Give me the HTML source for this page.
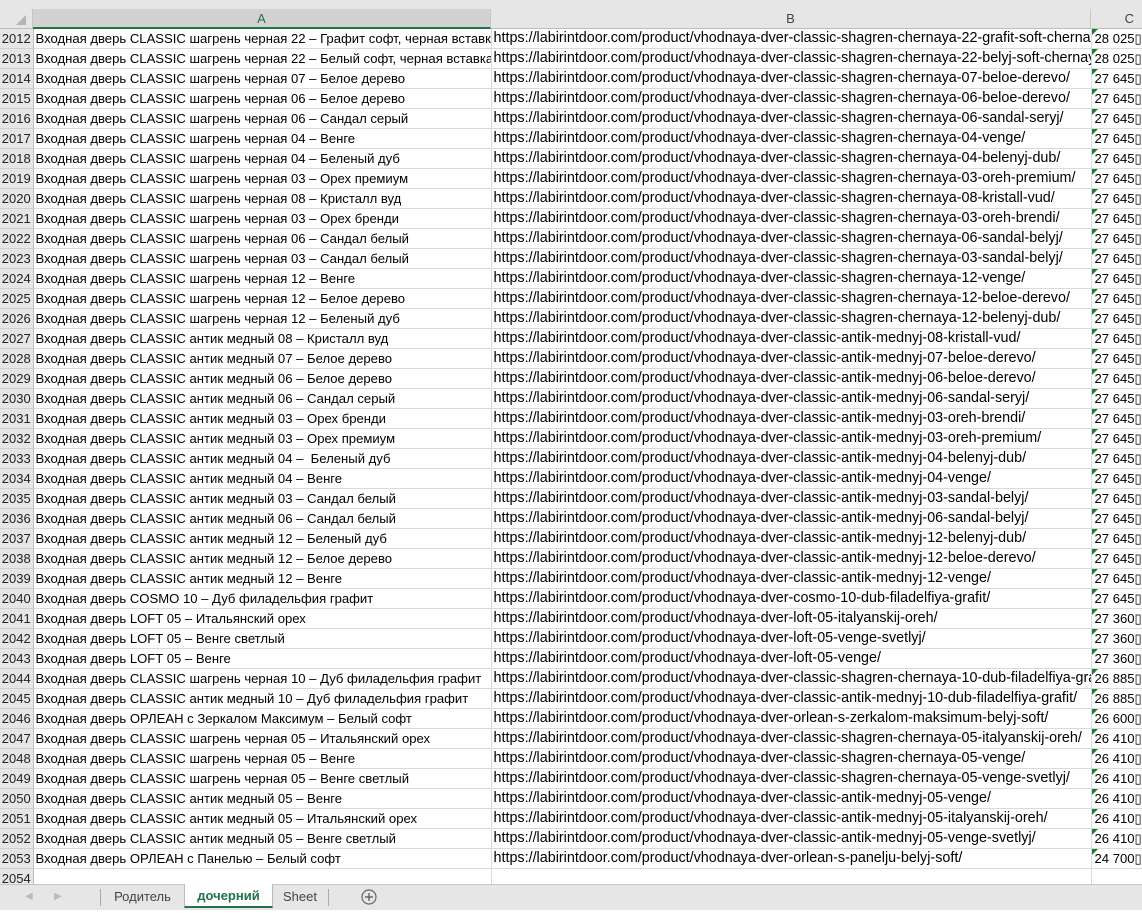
<!DOCTYPE html>
<html><head><meta charset="utf-8"><style>
body{margin:0;width:1142px;height:909px;overflow:hidden;background:#fff;font-family:"Liberation Sans",sans-serif;font-size:13.1px;color:#000;position:relative}
.top{position:absolute;left:0;top:0;width:1142px;height:9px;background:#e6e6e6}
.hdr{position:absolute;top:9px;left:0;height:19px;width:1142px;background:#e6e6e6;border-bottom:1px solid #bdbdbd}
.hdr div{position:absolute;top:0;height:19px;line-height:20px;text-align:center;color:#444;font-size:13px;border-right:1px solid #c6c6c6}
.hdr .a{background:#d2d2d2;border-bottom:2px solid #217346;height:18px;color:#217346}
table{position:absolute;top:29px;left:0;width:1142px;border-collapse:collapse;table-layout:fixed}
td{height:19px;border-right:1px solid #dadada;border-bottom:1px solid #dadada;padding:0 0 0 2px;white-space:nowrap;overflow:hidden;line-height:19px}
td.u{font-size:14.35px;padding-left:2px}
td.n{background:#e6e6e6;color:#222;padding:0;text-align:center;border-right:1px solid #bdbdbd;border-bottom:1px solid #d0d0d0;font-size:13px}
td.c{position:relative;padding-left:3px}
td.c:before{content:"";position:absolute;left:0;top:0;border-top:6px solid #1e7a32;border-right:6px solid transparent}
.tabs{position:absolute;left:0;top:884px;width:1142px;height:25px;background:#e6e6e6;border-top:1px solid #c6c6c6;font-size:13px;color:#444}
.tabs span{position:absolute;top:0;height:24px;line-height:24px}
</style></head><body>
<div class="top"></div>
<div class="hdr">
<div style="left:0;width:32px;background:#e6e6e6"><svg width="32" height="19"><polygon points="26,6 26,16 16,16" fill="#b4b4b4"/></svg></div>
<div class="a" style="left:33px;width:457px">A</div>
<div style="left:491px;width:599px">B</div>
<div style="left:1091px;width:51px;border-right:none;text-align:right;padding-right:8px;box-sizing:border-box">C</div>
</div>
<table>
<colgroup><col style="width:33px"><col style="width:458px"><col style="width:600px"><col style="width:51px"></colgroup>
<tbody>
<tr><td class="n">2012</td><td>Входная дверь CLASSIC шагрень черная 22 – Графит софт, черная вставка</td><td class="u">https://labirintdoor.com/product/vhodnaya-dver-classic-shagren-chernaya-22-grafit-soft-chernaya/</td><td class="c">28 025▯</td></tr>
<tr><td class="n">2013</td><td>Входная дверь CLASSIC шагрень черная 22 – Белый софт, черная вставка</td><td class="u">https://labirintdoor.com/product/vhodnaya-dver-classic-shagren-chernaya-22-belyj-soft-chernaya/</td><td class="c">28 025▯</td></tr>
<tr><td class="n">2014</td><td>Входная дверь CLASSIC шагрень черная 07 – Белое дерево</td><td class="u">https://labirintdoor.com/product/vhodnaya-dver-classic-shagren-chernaya-07-beloe-derevo/</td><td class="c">27 645▯</td></tr>
<tr><td class="n">2015</td><td>Входная дверь CLASSIC шагрень черная 06 – Белое дерево</td><td class="u">https://labirintdoor.com/product/vhodnaya-dver-classic-shagren-chernaya-06-beloe-derevo/</td><td class="c">27 645▯</td></tr>
<tr><td class="n">2016</td><td>Входная дверь CLASSIC шагрень черная 06 – Сандал серый</td><td class="u">https://labirintdoor.com/product/vhodnaya-dver-classic-shagren-chernaya-06-sandal-seryj/</td><td class="c">27 645▯</td></tr>
<tr><td class="n">2017</td><td>Входная дверь CLASSIC шагрень черная 04 – Венге</td><td class="u">https://labirintdoor.com/product/vhodnaya-dver-classic-shagren-chernaya-04-venge/</td><td class="c">27 645▯</td></tr>
<tr><td class="n">2018</td><td>Входная дверь CLASSIC шагрень черная 04 – Беленый дуб</td><td class="u">https://labirintdoor.com/product/vhodnaya-dver-classic-shagren-chernaya-04-belenyj-dub/</td><td class="c">27 645▯</td></tr>
<tr><td class="n">2019</td><td>Входная дверь CLASSIC шагрень черная 03 – Орех премиум</td><td class="u">https://labirintdoor.com/product/vhodnaya-dver-classic-shagren-chernaya-03-oreh-premium/</td><td class="c">27 645▯</td></tr>
<tr><td class="n">2020</td><td>Входная дверь CLASSIC шагрень черная 08 – Кристалл вуд</td><td class="u">https://labirintdoor.com/product/vhodnaya-dver-classic-shagren-chernaya-08-kristall-vud/</td><td class="c">27 645▯</td></tr>
<tr><td class="n">2021</td><td>Входная дверь CLASSIC шагрень черная 03 – Орех бренди</td><td class="u">https://labirintdoor.com/product/vhodnaya-dver-classic-shagren-chernaya-03-oreh-brendi/</td><td class="c">27 645▯</td></tr>
<tr><td class="n">2022</td><td>Входная дверь CLASSIC шагрень черная 06 – Сандал белый</td><td class="u">https://labirintdoor.com/product/vhodnaya-dver-classic-shagren-chernaya-06-sandal-belyj/</td><td class="c">27 645▯</td></tr>
<tr><td class="n">2023</td><td>Входная дверь CLASSIC шагрень черная 03 – Сандал белый</td><td class="u">https://labirintdoor.com/product/vhodnaya-dver-classic-shagren-chernaya-03-sandal-belyj/</td><td class="c">27 645▯</td></tr>
<tr><td class="n">2024</td><td>Входная дверь CLASSIC шагрень черная 12 – Венге</td><td class="u">https://labirintdoor.com/product/vhodnaya-dver-classic-shagren-chernaya-12-venge/</td><td class="c">27 645▯</td></tr>
<tr><td class="n">2025</td><td>Входная дверь CLASSIC шагрень черная 12 – Белое дерево</td><td class="u">https://labirintdoor.com/product/vhodnaya-dver-classic-shagren-chernaya-12-beloe-derevo/</td><td class="c">27 645▯</td></tr>
<tr><td class="n">2026</td><td>Входная дверь CLASSIC шагрень черная 12 – Беленый дуб</td><td class="u">https://labirintdoor.com/product/vhodnaya-dver-classic-shagren-chernaya-12-belenyj-dub/</td><td class="c">27 645▯</td></tr>
<tr><td class="n">2027</td><td>Входная дверь CLASSIC антик медный 08 – Кристалл вуд</td><td class="u">https://labirintdoor.com/product/vhodnaya-dver-classic-antik-mednyj-08-kristall-vud/</td><td class="c">27 645▯</td></tr>
<tr><td class="n">2028</td><td>Входная дверь CLASSIC антик медный 07 – Белое дерево</td><td class="u">https://labirintdoor.com/product/vhodnaya-dver-classic-antik-mednyj-07-beloe-derevo/</td><td class="c">27 645▯</td></tr>
<tr><td class="n">2029</td><td>Входная дверь CLASSIC антик медный 06 – Белое дерево</td><td class="u">https://labirintdoor.com/product/vhodnaya-dver-classic-antik-mednyj-06-beloe-derevo/</td><td class="c">27 645▯</td></tr>
<tr><td class="n">2030</td><td>Входная дверь CLASSIC антик медный 06 – Сандал серый</td><td class="u">https://labirintdoor.com/product/vhodnaya-dver-classic-antik-mednyj-06-sandal-seryj/</td><td class="c">27 645▯</td></tr>
<tr><td class="n">2031</td><td>Входная дверь CLASSIC антик медный 03 – Орех бренди</td><td class="u">https://labirintdoor.com/product/vhodnaya-dver-classic-antik-mednyj-03-oreh-brendi/</td><td class="c">27 645▯</td></tr>
<tr><td class="n">2032</td><td>Входная дверь CLASSIC антик медный 03 – Орех премиум</td><td class="u">https://labirintdoor.com/product/vhodnaya-dver-classic-antik-mednyj-03-oreh-premium/</td><td class="c">27 645▯</td></tr>
<tr><td class="n">2033</td><td>Входная дверь CLASSIC антик медный 04 –&nbsp; Беленый дуб</td><td class="u">https://labirintdoor.com/product/vhodnaya-dver-classic-antik-mednyj-04-belenyj-dub/</td><td class="c">27 645▯</td></tr>
<tr><td class="n">2034</td><td>Входная дверь CLASSIC антик медный 04 – Венге</td><td class="u">https://labirintdoor.com/product/vhodnaya-dver-classic-antik-mednyj-04-venge/</td><td class="c">27 645▯</td></tr>
<tr><td class="n">2035</td><td>Входная дверь CLASSIC антик медный 03 – Сандал белый</td><td class="u">https://labirintdoor.com/product/vhodnaya-dver-classic-antik-mednyj-03-sandal-belyj/</td><td class="c">27 645▯</td></tr>
<tr><td class="n">2036</td><td>Входная дверь CLASSIC антик медный 06 – Сандал белый</td><td class="u">https://labirintdoor.com/product/vhodnaya-dver-classic-antik-mednyj-06-sandal-belyj/</td><td class="c">27 645▯</td></tr>
<tr><td class="n">2037</td><td>Входная дверь CLASSIC антик медный 12 – Беленый дуб</td><td class="u">https://labirintdoor.com/product/vhodnaya-dver-classic-antik-mednyj-12-belenyj-dub/</td><td class="c">27 645▯</td></tr>
<tr><td class="n">2038</td><td>Входная дверь CLASSIC антик медный 12 – Белое дерево</td><td class="u">https://labirintdoor.com/product/vhodnaya-dver-classic-antik-mednyj-12-beloe-derevo/</td><td class="c">27 645▯</td></tr>
<tr><td class="n">2039</td><td>Входная дверь CLASSIC антик медный 12 – Венге</td><td class="u">https://labirintdoor.com/product/vhodnaya-dver-classic-antik-mednyj-12-venge/</td><td class="c">27 645▯</td></tr>
<tr><td class="n">2040</td><td>Входная дверь COSMO 10 – Дуб филадельфия графит</td><td class="u">https://labirintdoor.com/product/vhodnaya-dver-cosmo-10-dub-filadelfiya-grafit/</td><td class="c">27 645▯</td></tr>
<tr><td class="n">2041</td><td>Входная дверь LOFT 05 – Итальянский орех</td><td class="u">https://labirintdoor.com/product/vhodnaya-dver-loft-05-italyanskij-oreh/</td><td class="c">27 360▯</td></tr>
<tr><td class="n">2042</td><td>Входная дверь LOFT 05 – Венге светлый</td><td class="u">https://labirintdoor.com/product/vhodnaya-dver-loft-05-venge-svetlyj/</td><td class="c">27 360▯</td></tr>
<tr><td class="n">2043</td><td>Входная дверь LOFT 05 – Венге</td><td class="u">https://labirintdoor.com/product/vhodnaya-dver-loft-05-venge/</td><td class="c">27 360▯</td></tr>
<tr><td class="n">2044</td><td>Входная дверь CLASSIC шагрень черная 10 – Дуб филадельфия графит</td><td class="u">https://labirintdoor.com/product/vhodnaya-dver-classic-shagren-chernaya-10-dub-filadelfiya-grafit/</td><td class="c">26 885▯</td></tr>
<tr><td class="n">2045</td><td>Входная дверь CLASSIC антик медный 10 – Дуб филадельфия графит</td><td class="u">https://labirintdoor.com/product/vhodnaya-dver-classic-antik-mednyj-10-dub-filadelfiya-grafit/</td><td class="c">26 885▯</td></tr>
<tr><td class="n">2046</td><td>Входная дверь ОРЛЕАН с Зеркалом Максимум – Белый софт</td><td class="u">https://labirintdoor.com/product/vhodnaya-dver-orlean-s-zerkalom-maksimum-belyj-soft/</td><td class="c">26 600▯</td></tr>
<tr><td class="n">2047</td><td>Входная дверь CLASSIC шагрень черная 05 – Итальянский орех</td><td class="u">https://labirintdoor.com/product/vhodnaya-dver-classic-shagren-chernaya-05-italyanskij-oreh/</td><td class="c">26 410▯</td></tr>
<tr><td class="n">2048</td><td>Входная дверь CLASSIC шагрень черная 05 – Венге</td><td class="u">https://labirintdoor.com/product/vhodnaya-dver-classic-shagren-chernaya-05-venge/</td><td class="c">26 410▯</td></tr>
<tr><td class="n">2049</td><td>Входная дверь CLASSIC шагрень черная 05 – Венге светлый</td><td class="u">https://labirintdoor.com/product/vhodnaya-dver-classic-shagren-chernaya-05-venge-svetlyj/</td><td class="c">26 410▯</td></tr>
<tr><td class="n">2050</td><td>Входная дверь CLASSIC антик медный 05 – Венге</td><td class="u">https://labirintdoor.com/product/vhodnaya-dver-classic-antik-mednyj-05-venge/</td><td class="c">26 410▯</td></tr>
<tr><td class="n">2051</td><td>Входная дверь CLASSIC антик медный 05 – Итальянский орех</td><td class="u">https://labirintdoor.com/product/vhodnaya-dver-classic-antik-mednyj-05-italyanskij-oreh/</td><td class="c">26 410▯</td></tr>
<tr><td class="n">2052</td><td>Входная дверь CLASSIC антик медный 05 – Венге светлый</td><td class="u">https://labirintdoor.com/product/vhodnaya-dver-classic-antik-mednyj-05-venge-svetlyj/</td><td class="c">26 410▯</td></tr>
<tr><td class="n">2053</td><td>Входная дверь ОРЛЕАН с Панелью – Белый софт</td><td class="u">https://labirintdoor.com/product/vhodnaya-dver-orlean-s-panelju-belyj-soft/</td><td class="c">24 700▯</td></tr>
<tr><td class="n">2054</td><td></td><td></td><td></td></tr>
</tbody></table>
<div class="tabs">
<span style="left:25px;color:#bbb;font-size:10px">◀</span>
<span style="left:54px;color:#bbb;font-size:10px">▶</span>
<span style="left:100px;width:1px;background:#aaa;top:4px;height:17px"></span>
<span style="left:101px;width:83px;text-align:center">Родитель</span>
<span style="left:184px;width:87px;text-align:center;background:#fff;color:#217346;font-weight:bold;border-bottom:2px solid #217346;height:22px;top:-1px;border-left:1px solid #bbb;border-right:1px solid #bbb">дочерний</span>
<span style="left:272px;width:56px;text-align:center">Sheet</span>
<span style="left:328px;width:1px;background:#aaa;top:4px;height:17px"></span>
<span style="left:361px;top:4px;height:16px"><svg width="16" height="16"><circle cx="8" cy="8" r="7" fill="none" stroke="#666" stroke-width="1.2"/><path d="M4 8h8M8 4v8" stroke="#666" stroke-width="1.4"/></svg></span>
</div>
</body></html>
